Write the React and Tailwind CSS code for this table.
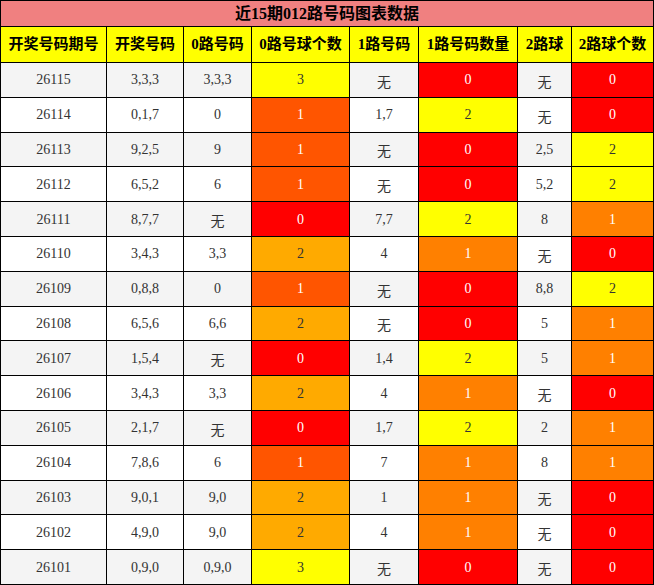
const rows = [
  ["26115", "3,3,3", "3,3,3", 3, "无", 0, "无", 0],
  ["26114", "0,1,7", "0", 1, "1,7", 2, "无", 0],
  ["26113", "9,2,5", "9", 1, "无", 0, "2,5", 2],
  ["26112", "6,5,2", "6", 1, "无", 0, "5,2", 2],
  ["26111", "8,7,7", "无", 0, "7,7", 2, "8", 1],
  ["26110", "3,4,3", "3,3", 2, "4", 1, "无", 0],
  ["26109", "0,8,8", "0", 1, "无", 0, "8,8", 2],
  ["26108", "6,5,6", "6,6", 2, "无", 0, "5", 1],
  ["26107", "1,5,4", "无", 0, "1,4", 2, "5", 1],
  ["26106", "3,4,3", "3,3", 2, "4", 1, "无", 0],
  ["26105", "2,1,7", "无", 0, "1,7", 2, "2", 1],
  ["26104", "7,8,6", "6", 1, "7", 1, "8", 1],
  ["26103", "9,0,1", "9,0", 2, "1", 1, "无", 0],
  ["26102", "4,9,0", "9,0", 2, "4", 1, "无", 0],
  ["26101", "0,9,0", "0,9,0", 3, "无", 0, "无", 0],
];

const headers = ["开奖号码期号", "开奖号码", "0路号码", "0路号球个数", "1路号码", "1路号码数量", "2路球", "2路球个数"];

// 0路 uses its own scale, 1路 and 2路 share one
const zeroColor = {
  0: "bg-[#ff0000] text-white",
  1: "bg-[#ff5500] text-white",
  2: "bg-[#ffaa00] text-[#333]",
  3: "bg-[#ffff00] text-[#333]",
};
const otherColor = {
  0: "bg-[#ff0000] text-white",
  1: "bg-[#ff8000] text-white",
  2: "bg-[#ffff00] text-[#333]",
  3: "bg-[#ffff00] text-[#333]",
};

const Cell = ({ v, bg }) => (
  <div className={`flex items-center justify-center text-[14px] ${bg}`}>
    {v === "无" ? <span className="font-['Noto_Sans_CJK_SC',sans-serif] pt-[3px]">无</span> : v}
  </div>
);

const App = () => {
  return (
    <div className="w-[654px] h-[585px] bg-white font-['Liberation_Serif','Noto_Sans_CJK_SC',serif]">
      <div className="grid h-[585px] grid-cols-[105px_76px_67px_97px_68px_98px_53px_81px] grid-rows-[25px_35px_repeat(15,1fr)] gap-px p-px bg-black">
        <div className="col-span-8 bg-[#f08080] flex items-center justify-center font-bold text-[16px] text-black">
          近15期012路号码图表数据
        </div>
        {headers.map((h) => (
          <div key={h} className="bg-[#ffff00] flex items-center justify-center font-bold text-[15px] text-black whitespace-nowrap">
            {h}
          </div>
        ))}
        {rows.map((r, i) => {
          const base = i % 2 === 0 ? "bg-[#f4f4f4] text-[#333]" : "bg-white text-[#333]";
          return [
            <Cell key={r[0] + "a"} v={r[0]} bg={base} />,
            <Cell key={r[0] + "b"} v={r[1]} bg={base} />,
            <Cell key={r[0] + "c"} v={r[2]} bg={base} />,
            <Cell key={r[0] + "d"} v={r[3]} bg={zeroColor[r[3]]} />,
            <Cell key={r[0] + "e"} v={r[4]} bg={base} />,
            <Cell key={r[0] + "f"} v={r[5]} bg={otherColor[r[5]]} />,
            <Cell key={r[0] + "g"} v={r[6]} bg={base} />,
            <Cell key={r[0] + "h"} v={r[7]} bg={otherColor[r[7]]} />,
          ];
        })}
      </div>
    </div>
  );
};

export default App;
